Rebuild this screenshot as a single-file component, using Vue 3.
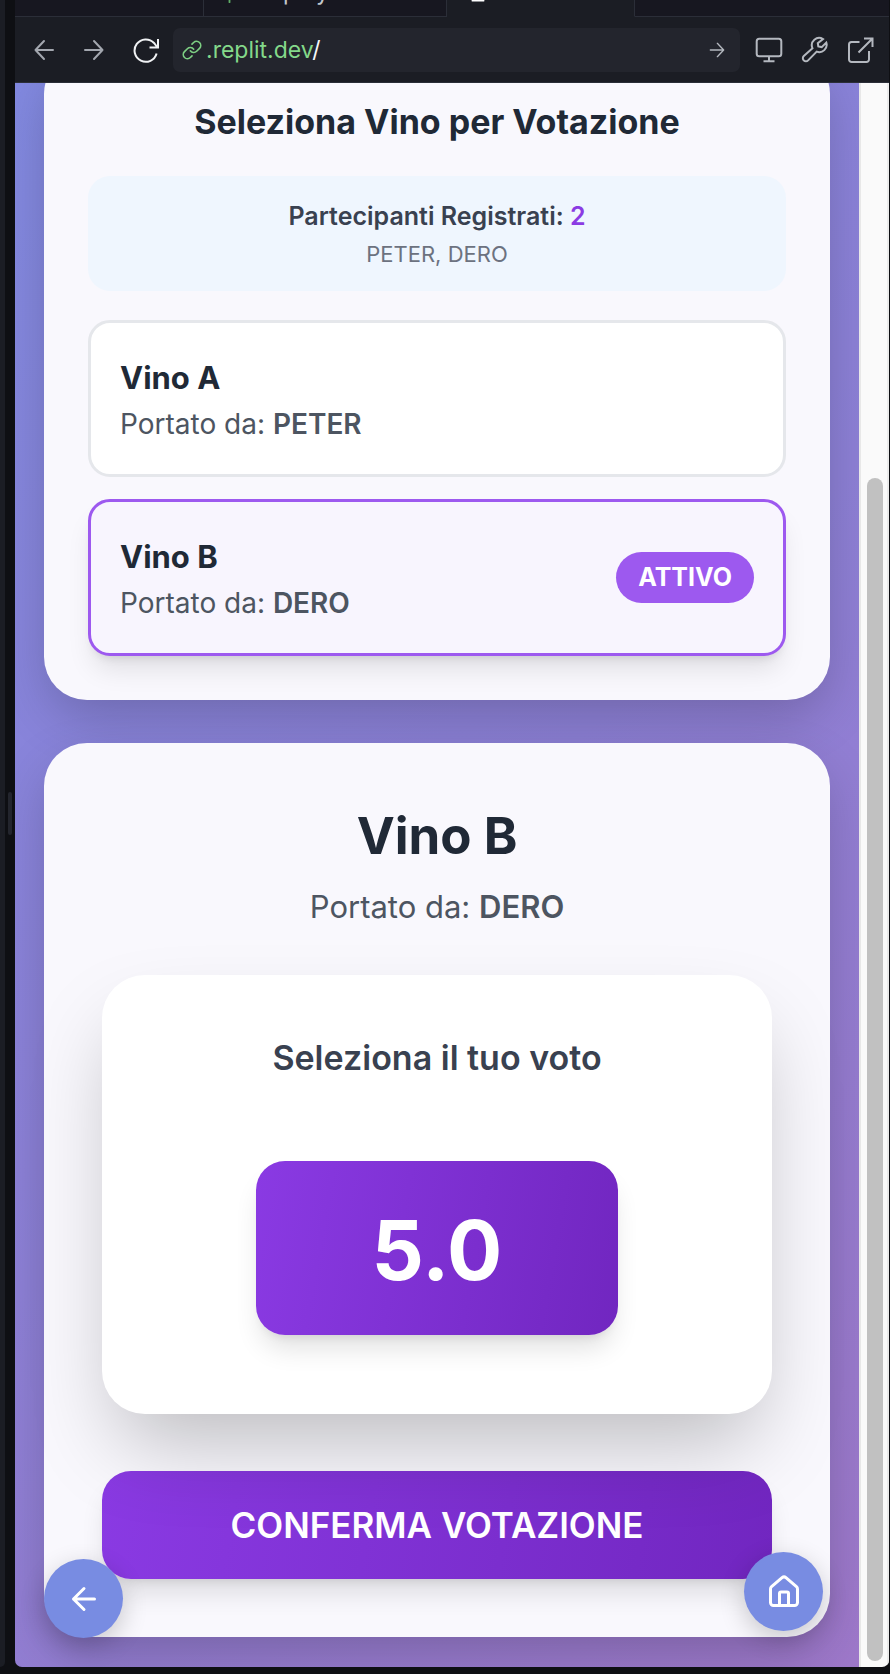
<script setup>
import { ref } from 'vue'

const wines = [
  { name: 'Vino A', owner: 'PETER' },
  { name: 'Vino B', owner: 'DERO' }
]
const participants = ['PETER', 'DERO']
const active = ref(1)
const score = ref(5)
</script>

<template>
  <div class="workspace">
    <div class="neighbour"></div>
    <div class="splitter"><span class="grip"></span></div>

    <div class="pane">
      <nav class="tabs" aria-label="Schede">
        <span class="tab first"></span>
        <span class="tab second">
          <svg class="tab-icon green" viewBox="0 0 12 24"><path d="M6 2v20" /></svg>
          <span>Deployments</span>
        </span>
        <span class="tab current">
          <svg class="tab-icon" viewBox="0 0 24 24"><path d="M6 22.500h12" /></svg>
        </span>
        <span class="tab rest"></span>
      </nav>

      <header class="toolbar">
        <button class="tool dim" aria-label="Indietro">
          <svg viewBox="0 0 24 24"><path d="M21 12H3.500M12 3 3.500 12l8.500 9" /></svg>
        </button>
        <button class="tool dim" aria-label="Avanti">
          <svg viewBox="0 0 24 24"><path d="M3 12h17.500M12 3l8.500 9-8.500 9" /></svg>
        </button>
        <button class="tool big" aria-label="Ricarica">
          <svg viewBox="0 0 28 28"><path d="M26 3v8.500h-8.500M25.500 11.500 22 7A11.200 11.200 0 1 0 24.600 17.500" /></svg>
        </button>
        <div class="address">
          <svg class="chain" viewBox="0 0 24 24">
            <path d="M10 13a5 5 0 0 0 7.540.540l3.500-3.500a5 5 0 0 0-7.070-7.070l-2 2" />
            <path d="M14 11a5 5 0 0 0-7.540-.540l-3.500 3.500a5 5 0 0 0 7.070 7.070l2-2" />
          </svg>
          <span class="url"><span class="host">.replit.dev</span>/</span>
          <button class="go" aria-label="Vai">
            <svg viewBox="0 0 24 24"><path d="M2 12h19.500M12.500 2l9.500 10-9.500 10" /></svg>
          </button>
        </div>
        <button class="tool big" aria-label="Dispositivo">
          <svg viewBox="0 0 28 28"><rect x="1.700" y="2.700" width="24.600" height="17.600" rx="2.500" /><path d="M14 20.500V25M8.500 25.200h11" /></svg>
        </button>
        <button class="tool big" aria-label="Strumenti">
          <svg viewBox="0 0 28 28"><path d="M22 3.100A7.300 7.300 0 0 0 11.500 12.300L2.800 20a3 3 0 0 0 0 4.400 3 3 0 0 0 4.300 0l8.600-8.800A7.300 7.300 0 0 0 25.300 6.600l-4.600 4.500-3.400-.6-.5-3.300z" /></svg>
        </button>
        <button class="tool big" aria-label="Apri in una nuova scheda">
          <svg viewBox="0 0 28 28"><path d="M17 2.500h8.500V11M25.500 2.500l-14 14M12.500 6H4.500a2.500 2.500 0 0 0-2.500 2.500v15A2.500 2.500 0 0 0 4.500 26h15a2.500 2.500 0 0 0 2.500-2.500v-8.500" /></svg>
        </button>
      </header>

      <div class="viewport">
        <main class="page">
          <section class="card picker">
            <h2 class="picker-title">Seleziona Vino per Votazione</h2>

            <div class="summary">
              <p class="summary-count">Partecipanti Registrati: <span>{{ participants.length }}</span></p>
              <p class="summary-names">{{ participants.join(', ') }}</p>
            </div>

            <div class="wines">
              <button
                v-for="(wine, i) in wines"
                :key="wine.name"
                class="wine"
                :class="{ active: i === active }"
                @click="active = i"
              >
                <span>
                  <span class="wine-name">{{ wine.name }}</span>
                  <span class="wine-owner">Portato da: <b>{{ wine.owner }}</b></span>
                </span>
                <span v-if="i === active" class="badge">ATTIVO</span>
              </button>
            </div>
          </section>

          <section class="card vote">
            <h1 class="vote-title">{{ wines[active].name }}</h1>
            <p class="vote-owner">Portato da: <b>{{ wines[active].owner }}</b></p>

            <div class="ballot">
              <h3>Seleziona il tuo voto</h3>
              <button class="score">{{ score.toFixed(1) }}</button>
            </div>

            <button class="confirm">CONFERMA VOTAZIONE</button>
          </section>
        </main>

        <div class="scrollbar"><span class="thumb"></span></div>

        <button class="float back" aria-label="Torna indietro">
          <svg viewBox="0 0 24 24"><path d="m12 19-7-7 7-7M19 12H5" /></svg>
        </button>
        <button class="float home" aria-label="Home">
          <svg viewBox="0 0 24 24">
            <path d="M15 21v-8a1 1 0 0 0-1-1h-4a1 1 0 0 0-1 1v8" />
            <path d="M3 10a2 2 0 0 1 .709-1.528l7-5.999a2 2 0 0 1 2.582 0l7 5.999A2 2 0 0 1 21 10v9a2 2 0 0 1-2 2H5a2 2 0 0 1-2-2z" />
          </svg>
        </button>
      </div>
    </div>
  </div>
</template>

<style>
body {
  margin: 0;
  background: #0e0f13;
}
</style>

<style scoped>
* {
  box-sizing: border-box;
}

h1,
h2,
h3,
p {
  margin: 0;
}

button {
  margin: 0;
  padding: 0;
  border: 0;
  background: none;
  color: inherit;
  font: inherit;
  cursor: pointer;
}

svg {
  display: block;
  fill: none;
  stroke: currentColor;
  stroke-linecap: round;
  stroke-linejoin: round;
}

b {
  font-weight: 600;
}

.workspace {
  display: flex;
  min-height: 100vh;
  padding: 0 1px 7px 0;
  background: #0e0f13;
  font-family: Inter, "Liberation Sans", sans-serif;
}

.neighbour {
  width: 5px;
  background: #1b1d24;
  border-radius: 0 0 7px 0;
}

.splitter {
  display: flex;
  align-items: center;
  justify-content: center;
  width: 10px;
}

.grip {
  width: 4px;
  height: 43px;
  margin-top: -40px;
  border-radius: 2px;
  background: #23252d;
}

.pane {
  display: flex;
  flex: 1;
  flex-direction: column;
  min-width: 0;
  overflow: hidden;
  border-radius: 0 0 7px 7px;
  background: #1b1d24;
}

/* Tabs */
.tabs {
  display: flex;
  height: 17px;
  overflow: hidden;
}

.tab {
  display: flex;
  align-items: flex-end;
  gap: 18px;
  height: 17px;
  padding: 0 20px 10px;
  border-right: 1px solid #2b2e38;
  border-bottom: 1px solid #2b2e38;
  background: #171720;
  color: #c2c8cc;
  font-size: 23px;
  line-height: 28px;
}

.first {
  width: 189px;
}

.second {
  flex: 0 0 243px;
}

.current {
  width: 188px;
  border-bottom-color: #1b1d24;
  background: #1b1d24;
  color: #ffffff;
}

.rest {
  flex: 1;
  border-right: 0;
}

.tab-icon {
  flex: none;
  width: 22px;
  height: 22px;
  margin-bottom: 4px;
  stroke-width: 2;
}

.green {
  width: 11px;
  margin-bottom: 2px;
  color: #5fae66;
}

/* Toolbar */
.toolbar {
  display: flex;
  align-items: center;
  height: 66px;
  padding: 0 14px 0 17px;
  border-bottom: 1px solid #2b2e38;
  color: #b4b8bf;
}

.tool svg {
  width: 24px;
  height: 24px;
  stroke-width: 2;
}

.tool.dim {
  margin-right: 26px;
  color: #a3a7af;
}

.tool.big svg {
  width: 28px;
  height: 28px;
  stroke-linecap: butt;
  stroke-linejoin: miter;
}

.tool.dim + .tool.big {
  margin-right: 13px;
  color: #f0f2f4;
}

.address {
  display: flex;
  flex: 1;
  align-items: center;
  height: 44px;
  margin-right: 1px;
  padding: 0 15px 0 9px;
  border-radius: 7px;
  background: #23252d;
}

.chain {
  width: 20px;
  height: 20px;
  margin-right: 4px;
  color: #7dcf83;
  stroke-width: 2;
}

.url {
  flex: 1;
  color: #f5f6f8;
  font-size: 23px;
  line-height: 32px;
}

.host {
  color: #84d98a;
}

.go svg {
  width: 16px;
  height: 16px;
  stroke-width: 2;
}

.address ~ .tool {
  margin-left: 14px;
}

.address ~ .tool ~ .tool {
  margin-left: 18px;
}

/* Previewed page */
.viewport {
  position: relative;
  display: flex;
  flex: 1;
  overflow: hidden;
}

.page {
  display: flex;
  flex: 1;
  flex-direction: column;
  gap: 43px;
  min-width: 0;
  padding: 0 29px 29px;
  background: linear-gradient(135deg, #8289e0 0%, #8d80d6 50%, #9e78ca 100%);
  text-align: center;
}

.card {
  border-radius: 43px;
  background: #f9f8fd;
  box-shadow: 0 20px 54px -6px rgba(0, 0, 0, 0.22);
}

.picker {
  margin-top: -32px;
  padding: 44px;
}

.picker-title {
  color: #202936;
  font-size: 34px;
  font-weight: 700;
  line-height: 54px;
}

.summary {
  margin: 27px 0 29px;
  padding: 22px;
  border-radius: 22px;
  background: #eff6fe;
}

.summary-count {
  color: #394150;
  font-size: 25px;
  font-weight: 600;
  line-height: 36px;
}

.summary-count span {
  color: #8b3be3;
}

.summary-names {
  margin-top: 6px;
  color: #6c7280;
  font-size: 22px;
  line-height: 29px;
}

.wines {
  display: flex;
  flex-direction: column;
  gap: 22px;
}

.wine {
  display: flex;
  align-items: center;
  justify-content: space-between;
  padding: 29px;
  border: 3px solid #e5e7eb;
  border-radius: 22px;
  background: #ffffff;
  text-align: left;
}

.wine.active {
  border-color: #9d59ef;
  background: #f8f5fe;
  box-shadow: 0 18px 27px -5px rgba(0, 0, 0, 0.1), 0 7px 11px -7px rgba(0, 0, 0, 0.15);
}

.wine-name,
.wine-owner {
  display: block;
}

.wine-name {
  color: #202936;
  font-size: 31px;
  font-weight: 700;
  line-height: 51px;
}

.wine-owner {
  color: #4d5561;
  font-size: 28px;
  line-height: 42px;
}

.badge {
  padding: 8px 22px;
  border-radius: 26px;
  background: #9d59ef;
  color: #ffffff;
  font-size: 25px;
  font-weight: 700;
  line-height: 35px;
}

.vote {
  padding: 58px;
}

.vote-title {
  color: #202936;
  font-size: 51px;
  font-weight: 700;
  line-height: 69px;
}

.vote-owner {
  margin: 15px 0 47px;
  color: #4d5561;
  font-size: 31px;
  line-height: 43px;
}

/* Raised above the confirm button so its shadow falls over it */
.ballot {
  position: relative;
  padding: 58px 58px 79px;
  border-radius: 43px;
  background: #ffffff;
  box-shadow: 0 42px 84px -16px rgba(0, 0, 0, 0.25);
}

.ballot h3 {
  margin-bottom: 78px;
  color: #394150;
  font-size: 34px;
  font-weight: 600;
  line-height: 50px;
}

.score,
.confirm {
  border-radius: 29px;
  background: linear-gradient(100deg, #8a3ae3, #7126c0);
  color: #ffffff;
  font-weight: 700;
  box-shadow: 0 18px 27px -5px rgba(0, 0, 0, 0.12), 0 7px 11px -7px rgba(0, 0, 0, 0.12);
}

.score {
  display: block;
  margin: 0 auto;
  padding: 39px 116px 33px;
  font-size: 82px;
  line-height: 102px;
}

.confirm {
  width: 100%;
  margin-top: 57px;
  padding: 29px;
  font-size: 35px;
  font-weight: 600;
  line-height: 50px;
}

.scrollbar {
  display: flex;
  flex-direction: column;
  justify-content: flex-end;
  align-items: center;
  width: 30px;
  padding: 0 0 6px 1px;
  border-right: 2px solid #ececec;
  border-left: 2px solid #e8e8e8;
  background: #fafafa;
}

.thumb {
  width: 16px;
  height: 75%;
  border-radius: 8px;
  background: #c1c1c1;
}

.float {
  position: absolute;
  display: grid;
  place-items: center;
  width: 79px;
  height: 79px;
  border-radius: 50%;
  background: #788ce2;
  color: #ffffff;
  box-shadow: 0 8px 26px rgba(0, 0, 0, 0.2);
}

.float svg {
  width: 36px;
  height: 36px;
  stroke-width: 2;
}

.back {
  bottom: 29px;
  left: 29px;
}

.home {
  right: 66px;
  bottom: 36px;
}
</style>
